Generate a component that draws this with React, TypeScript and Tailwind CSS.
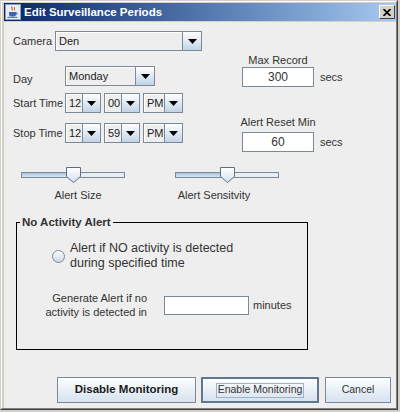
import React from "react";

const ArrowBtn = ({ w }: { w: string }) => (
  <div className={`${w} h-full border-l border-[#7a8a99] bg-linear-to-b from-[#ffffff] to-[#c2d3e6] flex items-center justify-center`}>
    <svg width="9" height="5" viewBox="0 0 9 5">
      <path d="M0 0H9L4.5 5Z" fill="#000" />
    </svg>
  </div>
);

const Combo = ({ w, text, arrow }: { w: string; text: string; arrow: string }) => (
  <div className={`${w} h-[20px] flex border border-[#7a8a99] bg-[#eeeeee]`}>
    <div className="flex-1 flex items-center pl-[2px] border-t border-l border-white text-[11px] text-[#222]">{text}</div>
    <ArrowBtn w={arrow} />
  </div>
);

const Field = ({ w, h, text }: { w: string; h: string; text?: string }) => (
  <div className={`${w} ${h} bg-white border border-[#7a8a99] flex items-center justify-center text-[12px] text-[#333]`}>
    {text}
  </div>
);

const Slider = () => (
  <div className="relative w-[104px] h-[16px] pt-[5px]">
    <div className="h-[6px] flex border border-[#7a8a99]">
      <div className="w-[51px] h-full bg-linear-to-b from-[#a9c1dc] to-[#dbe6f2]" />
      <div className="flex-1 h-full bg-[#e9ecf1]" />
    </div>
    <svg className="absolute left-[45px] top-0" width="15" height="16" viewBox="0 0 15 16">
      <defs>
        <linearGradient id="tg" x1="0" y1="0" x2="0" y2="1">
          <stop offset="0" stopColor="#ffffff" />
          <stop offset="1" stopColor="#d4e0ee" />
        </linearGradient>
      </defs>
      <path d="M0.5 0.5H14.5V9.5L7.5 15.5L0.5 9.5Z" fill="url(#tg)" stroke="#5e6f82" />
    </svg>
  </div>
);

export default function App() {
  return (
    <div className="w-[400px] h-[412px] bg-[#d4d0c8] font-['Liberation_Sans',Arial,sans-serif]">
      <div className="w-[398px] h-[410px] border border-t-[#d4d0c8] border-l-[#d4d0c8] border-r-[#404040] border-b-[#404040]">
        <div className="h-full flex flex-col border border-t-white border-l-white border-r-[#808080] border-b-[#808080] pl-[2px] pt-[1px]">
          {/* Title bar */}
          <div className="h-[18px] flex items-center bg-linear-to-r from-[#0a246a] to-[#a6caf0]">
            <svg className="ml-[1px]" width="16" height="16" viewBox="0 0 16 16">
              <rect x="0.5" y="0.5" width="15" height="15" fill="#e8eef7" stroke="#8aa0c0" />
              <path d="M7 2.5C5.5 4 8.5 4.5 7 6.5" stroke="#e0601a" strokeWidth="1.2" fill="none" />
              <path d="M9.5 3C8.5 4.2 10.3 4.8 9.3 6.3" stroke="#d23b1a" strokeWidth="1" fill="none" />
              <path d="M4 8H11V10.5C11 12 9.5 12.5 7.5 12.5C5.5 12.5 4 12 4 10.5Z" fill="#3d64b0" />
              <path d="M11 8.6C12.6 8.6 12.6 10.6 11 10.6" stroke="#3d64b0" strokeWidth="1" fill="none" />
              <path d="M2.5 13.3H12.5" stroke="#3d64b0" strokeWidth="1" />
            </svg>
            <span className="ml-[3px] text-white font-bold text-[11.5px] leading-[14px] whitespace-nowrap">Edit Surveillance Periods</span>
            <div className="ml-auto mr-[1px] w-[16px] h-[14px] bg-[#d4d0c8] border border-t-white border-l-white border-r-[#404040] border-b-[#404040] flex items-center justify-center">
              <svg width="8" height="7" viewBox="0 0 8 7">
                <path d="M0.5 0L7.5 7M7.5 0L0.5 7" stroke="#000" strokeWidth="1.7" />
              </svg>
            </div>
          </div>

          {/* Content */}
          <div className="mt-[1px] flex-1 flex flex-col bg-[#eeeeee] text-[#333333] text-[11px]">
            <div className="flex">
              <div className="flex flex-col pl-[9px] pt-[9px]">
                <div className="flex items-center h-[20px]">
                  <span className="w-[42px]">Camera</span>
                  <Combo w="w-[147px]" text="Den" arrow="w-[19px]" />
                </div>
                <div className="flex mt-[15px]">
                  <span className="w-[52px] mt-[7px] leading-[13px]">Day</span>
                  <Combo w="w-[90px]" text="Monday" arrow="w-[19px]" />
                </div>
                <div className="flex items-center mt-[7px]">
                  <span className="w-[52px] whitespace-nowrap">Start Time</span>
                  <div className="flex gap-[3px]">
                    <Combo w="w-[36px]" text="12" arrow="w-[18px]" />
                    <Combo w="w-[36px]" text="00" arrow="w-[18px]" />
                    <Combo w="w-[40px]" text="PM" arrow="w-[18px]" />
                  </div>
                </div>
                <div className="flex items-center mt-[10px]">
                  <span className="w-[52px] whitespace-nowrap">Stop Time</span>
                  <div className="flex gap-[3px]">
                    <Combo w="w-[36px]" text="12" arrow="w-[18px]" />
                    <Combo w="w-[36px]" text="59" arrow="w-[18px]" />
                    <Combo w="w-[40px]" text="PM" arrow="w-[18px]" />
                  </div>
                </div>
              </div>
              <div className="flex flex-col ml-[40px] pt-[32px]">
                <div className="w-[72px] flex justify-center leading-[13px] whitespace-nowrap">Max Record</div>
                <div className="flex items-center">
                  <Field w="w-[72px]" h="h-[20px]" text="300" />
                  <span className="ml-[6px]">secs</span>
                </div>
                <div className="w-[72px] flex justify-center leading-[13px] whitespace-nowrap mt-[29px]">Alert Reset Min</div>
                <div className="flex items-center mt-[3px]">
                  <Field w="w-[72px]" h="h-[20px]" text="60" />
                  <span className="ml-[6px]">secs</span>
                </div>
              </div>
            </div>

            {/* Sliders */}
            <div className="flex mt-[15px] pl-[17px]">
              <Slider />
              <div className="ml-[50px]">
                <Slider />
              </div>
            </div>
            <div className="flex mt-[6px] leading-[13px]">
              <div className="ml-[40px] w-[68px] flex justify-center whitespace-nowrap">Alert Size</div>
              <div className="ml-[52px] w-[100px] flex justify-center whitespace-nowrap">Alert Sensitvity</div>
            </div>

            {/* Group */}
            <fieldset className="mt-[13px] ml-[12px] w-[292px] border border-black pb-[30px]">
              <legend className="ml-[3px] px-[2px] font-bold text-[11.5px] leading-[14px] text-[#333]">No Activity Alert</legend>
              <div className="flex items-center mt-[12px] ml-[35px]">
                <div className="w-[13px] h-[13px] rounded-full border border-[#7a8a99] bg-linear-to-b from-[#ffffff] to-[#c8d6e6]" />
                <div className="ml-[5px] text-[12.5px] leading-[15px]">
                  Alert if NO activity is detected
                  <br />
                  during specified time
                </div>
              </div>
              <div className="flex items-center mt-[20px]">
                <div className="w-[130px] text-right leading-[14px]">
                  Generate Alert if no
                  <br />
                  activity is detected in
                </div>
                <div className="ml-[17px]">
                  <Field w="w-[85px]" h="h-[19px]" />
                </div>
                <span className="ml-[4px]">minutes</span>
              </div>
            </fieldset>

            {/* Buttons */}
            <div className="flex mt-[27px] pl-[53px]">
              <div className="w-[139px] h-[26px] border border-[#7a8a99] bg-linear-to-b from-[#fdfeff] to-[#d6e2ef] flex items-center justify-center font-bold text-[11.5px] text-[#1a1a1a]">
                Disable Monitoring
              </div>
              <div className="ml-[5px] w-[118px] h-[26px] border-2 border-[#63788f] bg-linear-to-b from-[#fdfeff] to-[#d6e2ef] flex items-center justify-center">
                <div className="px-[1px] h-[15px] flex items-center border border-[#9fb3c8] text-[10.5px] text-[#333]">Enable Monitoring</div>
              </div>
              <div className="ml-[6px] w-[66px] h-[26px] border border-[#7a8a99] bg-linear-to-b from-[#fdfeff] to-[#d6e2ef] flex items-center justify-center text-[10.5px] text-[#333]">
                Cancel
              </div>
            </div>
          </div>
        </div>
      </div>
    </div>
  );
}
